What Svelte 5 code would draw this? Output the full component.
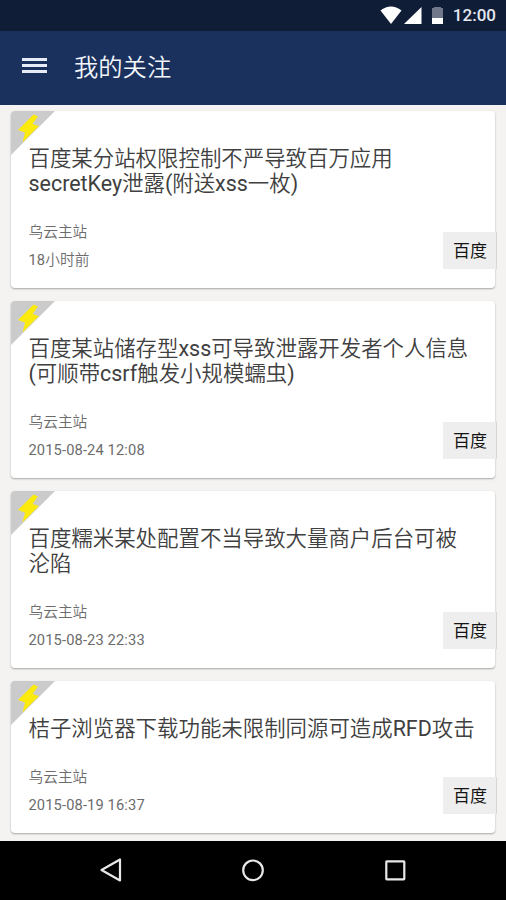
<script lang="ts">
	type Post = { title: string[]; source: string; time: string; tag: string };

	const posts: Post[] = [
		{
			title: ['百度某分站权限控制不严导致百万应用', 'secretKey泄露(附送xss一枚)'],
			source: '乌云主站',
			time: '18小时前',
			tag: '百度'
		},
		{
			title: ['百度某站储存型xss可导致泄露开发者个人信息', '(可顺带csrf触发小规模蠕虫)'],
			source: '乌云主站',
			time: '2015-08-24 12:08',
			tag: '百度'
		},
		{
			title: ['百度糯米某处配置不当导致大量商户后台可被', '沦陷'],
			source: '乌云主站',
			time: '2015-08-23 22:33',
			tag: '百度'
		},
		{
			title: ['桔子浏览器下载功能未限制同源可造成RFD攻击'],
			source: '乌云主站',
			time: '2015-08-19 16:37',
			tag: '百度'
		}
	];
</script>

<div class="screen">
	<div class="status-bar">
		<svg class="signals" width="66" height="20" viewBox="0 0 66 20">
			<path d="M0.5 4.5 Q11 -3.5 21.5 4.5 L11 18 Z" fill="#fff" />
			<path d="M41.5 1 V18 H24 Z" fill="#fff" />
			<path d="M52 2 H54 V1 H61 V2 H63 V12 H52 Z" fill="#70778b" />
			<path d="M52 12 H63 V18 H52 Z" fill="#fff" />
		</svg>
		<span class="clock">12:00</span>
	</div>

	<header class="app-bar">
		<button class="menu" aria-label="menu">
			<i></i>
			<i></i>
			<i></i>
		</button>
		<h1>我的关注</h1>
	</header>

	<main class="list">
		{#each posts as post}
			<article class="card">
				<svg class="corner" width="44" height="44" viewBox="0 0 44 44">
					<path d="M0 0 H44 L0 44 Z" fill="#cbcbcb" />
					<path d="M22.5 3.5 L7 19 L14 21.5 L11.5 31.5 L28 15 L21.5 13 L27 5.5 Z" fill="#fbea0c" />
				</svg>
				<h2>
					{#each post.title as line}
						<span>{line}</span>
					{/each}
				</h2>
				<div class="info">
					<div class="meta">
						<p>{post.source}</p>
						<p class="time">{post.time}</p>
					</div>
					<span class="tag">{post.tag}</span>
				</div>
			</article>
		{/each}
	</main>

	<nav class="nav-bar">
		<svg width="24" height="26" viewBox="0 0 24 26">
			<path d="M21 2.5 V23.5 L2.5 13 Z" />
		</svg>
		<svg width="24" height="26" viewBox="0 0 24 26">
			<circle cx="12" cy="13.3" r="9.8" />
		</svg>
		<svg width="24" height="26" viewBox="0 0 24 26">
			<rect x="3.3" y="4.3" width="18" height="18" rx="0.5" />
		</svg>
	</nav>
</div>

<style>
	:global(body) {
		margin: 0;
	}
	.screen {
		display: flex;
		flex-direction: column;
		width: 506px;
		height: 900px;
		overflow: hidden;
		background: #f4f3f1;
		font-family: Roboto, 'Noto Sans CJK SC DemiLight', 'Noto Sans CJK SC', sans-serif;
	}
	h1,
	h2,
	p {
		margin: 0;
		font-weight: 400;
	}
	.status-bar {
		display: flex;
		flex: none;
		align-items: center;
		justify-content: flex-end;
		gap: 7px;
		box-sizing: border-box;
		height: 31px;
		padding-right: 10px;
		background: #101d37;
	}
	.signals {
		margin-top: 1px;
	}
	.clock {
		color: #e4e8f1;
		font-size: 17px;
		font-weight: 500;
		line-height: 31px;
	}
	.app-bar {
		display: flex;
		flex: none;
		align-items: center;
		gap: 27px;
		height: 74px;
		padding-left: 22px;
		background: #1a315e;
	}
	.menu {
		display: flex;
		flex-direction: column;
		gap: 3px;
		width: 25px;
		margin-top: -5px;
		padding: 0;
		border: none;
		background: none;
	}
	.menu i {
		height: 3px;
		background: #e6ebf5;
	}
	h1 {
		color: #f3f6fb;
		font-size: 24.3px;
		line-height: 36px;
	}
	.list {
		display: flex;
		flex: 1;
		flex-direction: column;
		gap: 13px;
		min-height: 0;
		padding: 6px 11px 0;
		overflow: hidden;
	}
	.card {
		position: relative;
		flex: none;
		box-sizing: border-box;
		padding: 35px 0 14px 17.5px;
		border-radius: 4px;
		background: #fff;
		box-shadow: 0 1px 2px rgba(0, 0, 0, 0.32);
	}
	.corner {
		position: absolute;
		top: 0;
		left: 0;
		border-top-left-radius: 4px;
	}
	h2 {
		color: #404040;
		font-size: 21.43px;
		line-height: 25px;
		white-space: nowrap;
	}
	h2 span {
		display: block;
	}
	.info {
		display: flex;
		align-items: flex-end;
		justify-content: space-between;
		margin-top: 22px;
	}
	.meta {
		color: #6c6c6c;
		font-size: 14.7px;
		line-height: 28px;
	}
	.time {
		margin-top: -0.5px;
		margin-bottom: 0.5px;
		letter-spacing: 0.12px;
	}
	.tag {
		box-sizing: border-box;
		width: 54px;
		height: 37px;
		margin: 0 -2px 5px 0;
		padding-left: 10px;
		border-right: 1px solid #d4d6d8;
		background: #eee;
		color: #151515;
		font-family: 'Noto Sans CJK SC', sans-serif;
		font-size: 17px;
		line-height: 36px;
	}
	.nav-bar {
		display: flex;
		flex: none;
		justify-content: space-between;
		height: 59px;
		box-sizing: border-box;
		padding: 16px 99px 0;
		background: #000;
	}
	.nav-bar path,
	.nav-bar circle,
	.nav-bar rect {
		fill: none;
		stroke: #e8e8e8;
		stroke-width: 2.2;
		stroke-linejoin: round;
	}
</style>
